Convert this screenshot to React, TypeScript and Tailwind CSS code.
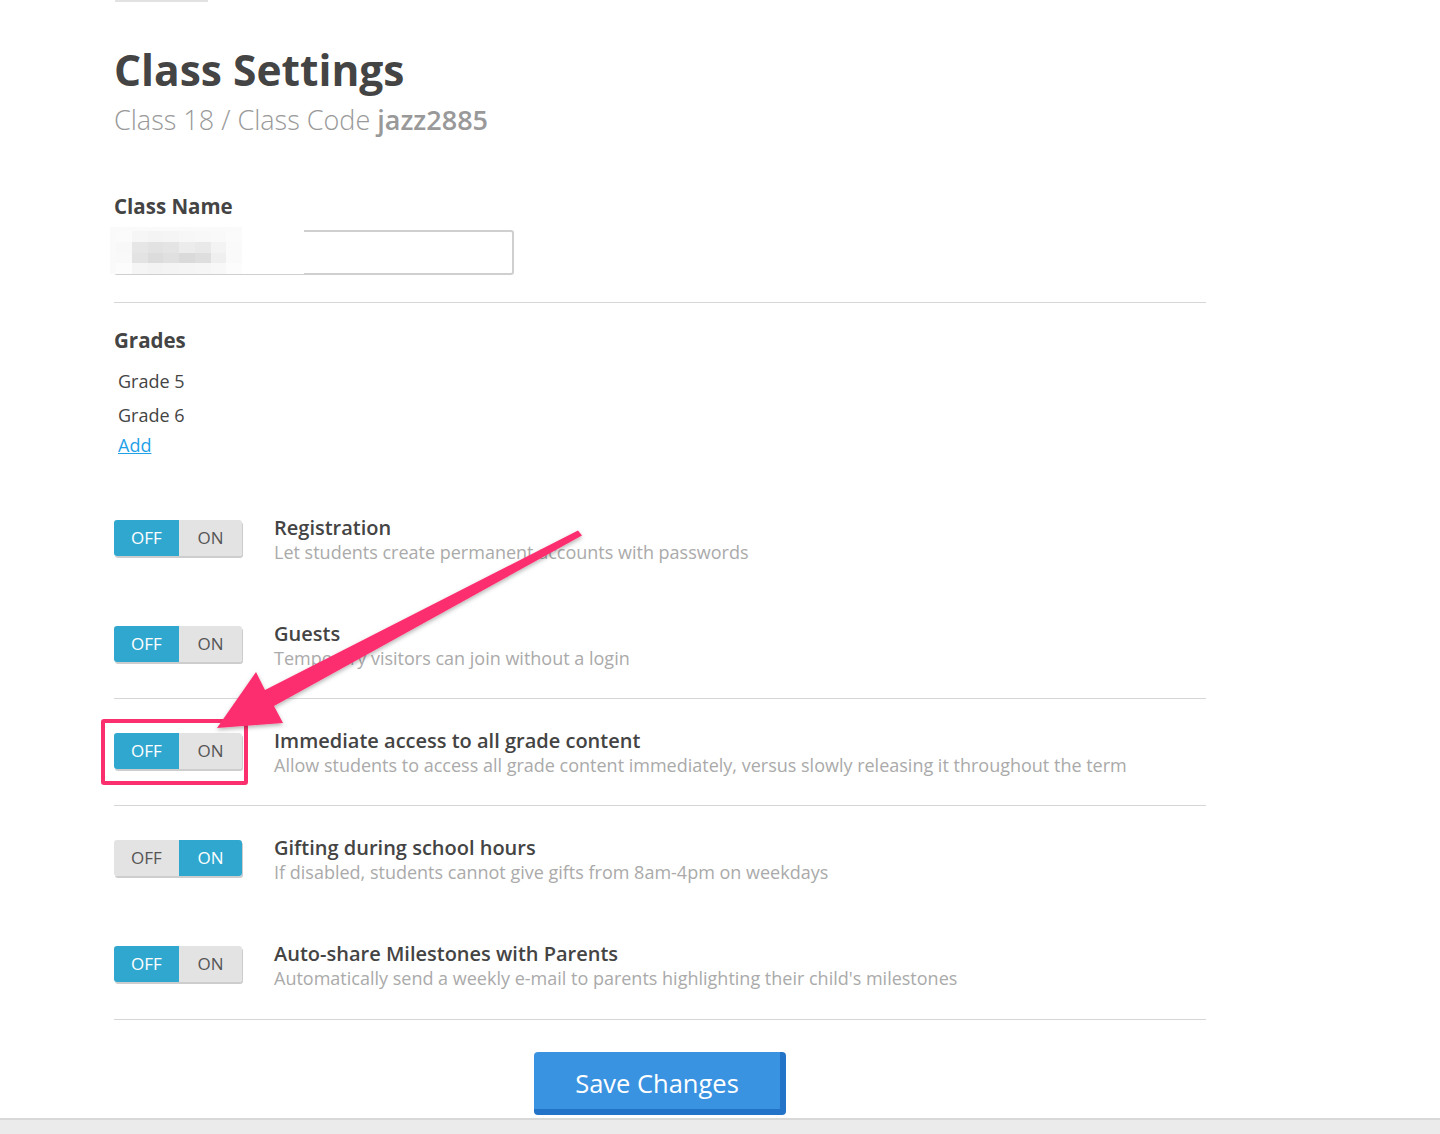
import React from 'react';

type Row = { title: string; desc: string; on: boolean };

const groups: Row[][] = [
  [
    { title: 'Registration', desc: 'Let students create permanent accounts with passwords', on: false },
    { title: 'Guests', desc: 'Temporary visitors can join without a login', on: false },
  ],
  [
    { title: 'Immediate access to all grade content', desc: 'Allow students to access all grade content immediately, versus slowly releasing it throughout the term', on: false },
  ],
  [
    { title: 'Gifting during school hours', desc: 'If disabled, students cannot give gifts from 8am-4pm on weekdays', on: true },
    { title: 'Auto-share Milestones with Parents', desc: "Automatically send a weekly e-mail to parents highlighting their child's milestones", on: false },
  ],
];

const Toggle: React.FC<{ on: boolean }> = ({ on }) => (
  <div className="flex h-[36px] w-[128px] shrink-0 overflow-hidden rounded-[3px] text-[17px] leading-[36px] shadow-[1px_2px_0_#cdcdcd]">
    <div className={`w-[65px] text-center ${on ? 'bg-[#e3e3e3] text-[#555]' : 'bg-[#30a7cf] text-white'}`}>OFF</div>
    <div className={`w-[63px] text-center ${on ? 'bg-[#30a7cf] text-white' : 'bg-[#e3e3e3] text-[#555]'}`}>ON</div>
  </div>
);

const SettingRow: React.FC<{ row: Row }> = ({ row }) => (
  <div className="flex items-start">
    <div className="mt-[4px]">
      <Toggle on={row.on} />
    </div>
    <div className="ml-[32px]">
      <div className="text-[20px] font-semibold leading-[24px] text-[#444]">{row.title}</div>
      <div className="text-[18px] leading-[24px] text-[#aaa]">{row.desc}</div>
    </div>
  </div>
);

const Mosaic: React.FC = () => {
  const cells = [
    '#fbfbfb', '#f6f6f6', '#f4f4f4', '#f5f5f5', '#f7f7f7', '#f8f8f8', '#f9f9f9', '#fbfbfb',
    '#f8f8f8', '#e6e6e6', '#e2e2e2', '#e4e4e4', '#ececec', '#e9e9e9', '#f3f3f3', '#fafafa',
    '#f9f9f9', '#e3e3e3', '#dcdcdc', '#e0e0e0', '#dadada', '#dedede', '#efefef', '#fafafa',
    '#fcfcfc', '#f5f5f5', '#f3f3f3', '#f4f4f4', '#f5f5f5', '#f6f6f6', '#f8f8f8', '#fcfcfc',
  ];
  return (
    <div className="absolute left-[-6px] top-[-5px] flex h-[47px] w-[194px] bg-[#fafafa]">
      <div className="grid w-[132px] grid-cols-8 grid-rows-4 pl-[6px] pt-[4px]">
        {cells.map((c, i) => (
          <div key={i} style={{ background: c }} />
        ))}
      </div>
      <div className="flex-1 bg-white" />
    </div>
  );
};

export default function App() {
  return (
    <div className="relative h-[1134px] w-full overflow-hidden bg-white font-['Open_Sans',sans-serif]">
      <div className="ml-[115px] h-[2px] w-[93px] bg-[#e2e2e2]" />
      <div className="ml-[114px] w-[1092px]">
        <h1 className="mt-[42px] text-[42.5px] font-bold leading-[52px] text-[#444]">Class Settings</h1>
        <div className="mt-[6px] text-[27px] font-light leading-[36px] text-[#999]">
          Class 18 / Class Code <span className="font-semibold">jazz2885</span>
        </div>

        <div className="mt-[54px] text-[20.5px] font-bold leading-[28px] text-[#444]">Class Name</div>
        <div className="relative mt-[10px] h-[45px] w-[400px] rounded-[3px] border-2 border-[#cfcfcf] bg-white">
          <Mosaic />
        </div>

        <div className="mt-[27px] h-px bg-[#d6d6d6]" />

        <div className="mt-[23px] text-[20.5px] font-bold leading-[28px] text-[#444]">Grades</div>
        <div className="ml-[4px] mt-[15px] text-[18px] leading-[24px] text-[#444]">Grade 5</div>
        <div className="ml-[4px] mt-[10px] text-[18px] leading-[24px] text-[#444]">Grade 6</div>
        <a href="#" className="ml-[4px] mt-[6px] block w-fit text-[18px] leading-[24px] text-[#1fa1e8] underline">Add</a>

        <div className="mt-[59px]">
          {groups.map((g, gi) => (
            <div key={gi}>
              {gi > 0 && <div className="mb-[30px] mt-[28px] h-px bg-[#d6d6d6]" />}
              <div className="flex flex-col gap-[58px]">
                {g.map(r => (
                  <SettingRow key={r.title} row={r} />
                ))}
              </div>
            </div>
          ))}
        </div>

        <div className="mt-[29px] h-px bg-[#d6d6d6]" />

        <div className="mt-[32px] flex justify-center">
          <button className="h-[63px] w-[252px] rounded-[4px] border-b-[6px] border-r-[6px] border-[#2373c9] bg-[#3a93e0] pt-[5px] text-[25.5px] leading-[36px] text-white">
            Save Changes
          </button>
        </div>
      </div>

      <div className="absolute bottom-0 left-0 right-0 h-[16px] border-t-2 border-[#d8d8d8] bg-[#ebebeb]" />

      {/* annotation overlay */}
      <div className="pointer-events-none absolute left-[101px] top-[719px] h-[66px] w-[147px] rounded-[3px] border-[4px] border-[#fc2f6e]" />
      <svg className="pointer-events-none absolute left-0 top-0" width="1440" height="1134" viewBox="0 0 1440 1134">
        <defs>
          <filter id="sh" x="-10%" y="-10%" width="120%" height="120%">
            <feDropShadow dx="0" dy="2" stdDeviation="2" floodColor="#000" floodOpacity="0.3" />
          </filter>
        </defs>
        <polygon
          points="578,530.5 265,690 256,672 217,728 283,723 274,706 582,535.5"
          fill="#fd2f6f"
          strokeLinejoin="round"
          filter="url(#sh)"
        />
      </svg>
    </div>
  );
}
